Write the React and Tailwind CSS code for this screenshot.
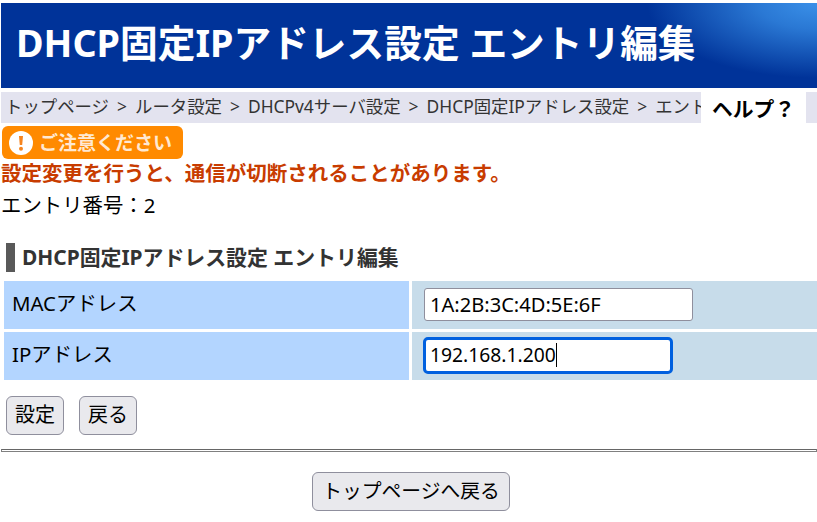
export default function App() {
  return (
    <div className="w-[817px] h-[522px] overflow-hidden bg-white text-black font-['Noto_Sans','Noto_Sans_CJK_JP',sans-serif] text-[18px]">
      <div className="pt-[3px] pl-px">
        <div className="h-[85px] flex items-center pl-[15px] bg-[#003399] bg-[radial-gradient(ellipse_170px_75px_at_100%_0%,#3a90e8_0%,#2a78d4_35%,#003399_100%)]">
          <h1 className="text-[37.7px] leading-[46px] font-bold text-white relative top-[-3px] whitespace-nowrap">DHCP固定IPアドレス設定 エントリ編集</h1>
        </div>
      </div>
      <div className="mt-[4px] ml-px h-[31px] flex bg-[#e3e3ef]">
        <div className="w-[700px] overflow-hidden whitespace-nowrap pl-[4px] text-[17.4px] leading-[29px] text-[#333333] [word-spacing:3.5px]">
          トップページ &gt; ルータ設定 &gt; DHCPv4サーバ設定 &gt; DHCP固定IPアドレス設定 &gt; エントリ編集
        </div>
        <div className="w-[105px] bg-white text-center font-bold text-[20.8px] leading-[34px]">ヘルプ？</div>
      </div>
      <div className="mt-[3px] ml-[2px] w-[181px] h-[33px] rounded-[6px] bg-[#ff8a00] flex items-center pl-[7px] gap-[6px]">
        <svg width="24" height="24" viewBox="0 0 24 24" className="shrink-0">
          <circle cx="12" cy="12" r="12" fill="#fff" />
          <path d="M10 5h4l-.8 9h-2.4z" fill="#f5841f" />
          <circle cx="12" cy="17.8" r="2" fill="#f5841f" />
        </svg>
        <span className="text-[19px] leading-[24px] font-bold text-[#ffe9d2] whitespace-nowrap">ご注意ください</span>
      </div>
      <p className="ml-[1px] text-[#c83c00] font-bold text-[20.5px] leading-[28px]">設定変更を行うと、通信が切断されることがあります。</p>
      <p className="mt-[4px] ml-[1px] text-[20.4px] leading-[28px]">エントリ番号：2</p>
      <div className="mt-[24px] ml-[6px] flex items-center h-[29px] gap-[7px]">
        <span className="w-[9px] h-[29px] bg-[#595959]" />
        <h2 className="font-bold text-[20.9px] leading-[29px] text-[#333333] whitespace-nowrap">DHCP固定IPアドレス設定 エントリ編集</h2>
      </div>
      <div className="mt-[9px] ml-[4px] grid grid-cols-[405px_1fr] gap-x-[3px] gap-y-[3px]">
        <div className="h-[48px] bg-[#b3d5ff] pl-[8px] leading-[44px] text-[20.4px]">MACアドレス</div>
        <div className="h-[48px] bg-[#c7dcea] pl-[12px] flex items-center">
          <input readOnly value="1A:2B:3C:4D:5E:6F" className="w-[269px] h-[33px] bg-white border border-[#8f8f9d] rounded-[3px] pl-[5px] text-[20.1px] outline-none relative top-[-1px]" />
        </div>
        <div className="h-[48px] bg-[#b3d5ff] pl-[8px] leading-[44px] text-[20.4px]">IPアドレス</div>
        <div className="h-[48px] bg-[#c7dcea] pl-[11px] flex items-center">
          <div className="w-[250px] h-[37px] bg-white border-[3px] border-[#0060df] rounded-[5px] pl-[4px] text-[19.3px] leading-[31px] flex items-center relative top-[-1px]">
            <span className="relative top-[-1px]">192.168.1.200</span>
            <span className="w-px h-[24px] bg-black" />
          </div>
        </div>
      </div>
      <div className="mt-[16px] ml-[6px] flex gap-[15px]">
        <button className="w-[58px] h-[39px] bg-[#e9e9ed] border border-[#8f8f9d] rounded-[6px] text-[20px] leading-[28px] pb-[2px]">設定</button>
        <button className="w-[58px] h-[39px] bg-[#e9e9ed] border border-[#8f8f9d] rounded-[6px] text-[20px] leading-[28px] pb-[2px]">戻る</button>
      </div>
      <hr className="mt-[14px] ml-px h-px box-content border-x border-y border-[#808080] border-t-[#666666]" />
      <div className="mt-[20px] flex justify-center pl-[5px]">
        <button className="w-[198px] h-[39px] bg-[#e9e9ed] border border-[#8f8f9d] rounded-[6px] text-[19.8px] leading-[28px] pb-[2px] whitespace-nowrap">トップページへ戻る</button>
      </div>
    </div>
  );
}
